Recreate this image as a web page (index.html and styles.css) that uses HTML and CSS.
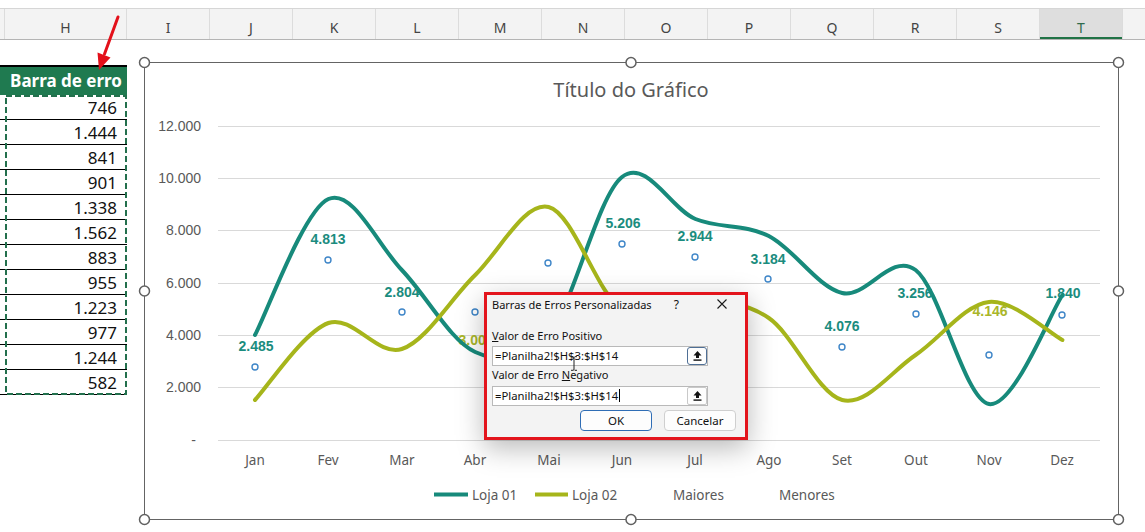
FILE: index.html
```html
<!DOCTYPE html>
<html lang="pt">
<head>
<meta charset="utf-8">
<title>Barras de erro</title>
<link rel="stylesheet" href="styles.css">
</head>
<body>
<div class="app">
  <div class="colbar">
    <div class="col col-g"></div>
    <div class="col col-h">H</div>
    <div class="col">I</div>
    <div class="col">J</div>
    <div class="col">K</div>
    <div class="col">L</div>
    <div class="col">M</div>
    <div class="col">N</div>
    <div class="col">O</div>
    <div class="col">P</div>
    <div class="col">Q</div>
    <div class="col">R</div>
    <div class="col">S</div>
    <div class="col col-sel">T</div>
    <div class="col col-rest"></div>
  </div>

  <div class="sheet">
    <div class="tablewrap">
      <div class="thead">Barra de erro</div>
      <div class="cell">746</div>
      <div class="cell">1.444</div>
      <div class="cell">841</div>
      <div class="cell">901</div>
      <div class="cell">1.338</div>
      <div class="cell">1.562</div>
      <div class="cell">883</div>
      <div class="cell">955</div>
      <div class="cell">1.223</div>
      <div class="cell">977</div>
      <div class="cell">1.244</div>
      <div class="cell">582</div>
      <svg class="ants" width="127" height="301" viewBox="0 0 127 301">
        <rect x="6" y="1" width="120" height="298" fill="none" stroke="#23704d" stroke-width="2" stroke-dasharray="6 3"/>
      </svg>
    </div>

    <div class="chart">
      <svg class="plot" width="975" height="458" viewBox="144 62 975 458">
        <rect x="144.5" y="62.5" width="974" height="457" fill="#fff" stroke="#646464" stroke-width="1"/>
        <text class="title" x="631" y="97">Título do Gráfico</text>

        <g class="grid">
          <line x1="218" x2="1100" y1="126.5" y2="126.5"/>
          <line x1="218" x2="1100" y1="178.5" y2="178.5"/>
          <line x1="218" x2="1100" y1="230.5" y2="230.5"/>
          <line x1="218" x2="1100" y1="283.5" y2="283.5"/>
          <line x1="218" x2="1100" y1="335.5" y2="335.5"/>
          <line x1="218" x2="1100" y1="387.5" y2="387.5"/>
          <line x1="218" x2="1100" y1="440.5" y2="440.5"/>
        </g>

        <g class="yaxis">
          <text x="201" y="131">12.000</text>
          <text x="201" y="183">10.000</text>
          <text x="201" y="235">8.000</text>
          <text x="201" y="288">6.000</text>
          <text x="201" y="340">4.000</text>
          <text x="201" y="392">2.000</text>
          <text x="196" y="445">-</text>
        </g>

        <g class="xaxis">
          <text x="255" y="465">Jan</text>
          <text x="328" y="465">Fev</text>
          <text x="402" y="465">Mar</text>
          <text x="475" y="465">Abr</text>
          <text x="549" y="465">Mai</text>
          <text x="622" y="465">Jun</text>
          <text x="695" y="465">Jul</text>
          <text x="769" y="465">Ago</text>
          <text x="842" y="465">Set</text>
          <text x="916" y="465">Out</text>
          <text x="989" y="465">Nov</text>
          <text x="1062" y="465">Dez</text>
        </g>

        <g class="dlabels">
          <text x="256" y="351">2.485</text>
          <text x="328" y="244">4.813</text>
          <text x="402" y="297">2.804</text>
          <text class="olive" x="476" y="345">3.005</text>
          <text x="623" y="228">5.206</text>
          <text x="695" y="241">2.944</text>
          <text x="768" y="264">3.184</text>
          <text x="842" y="331">4.076</text>
          <text x="915" y="298">3.256</text>
          <text class="olive" x="990" y="316">4.146</text>
          <text x="1063" y="298">1.840</text>
        </g>

        <path class="s1" d="M255,335 C267.2,312.3 303.9,209.8 328.4,199 C352.9,188.2 377.3,244.5 401.8,270 C426.3,295.5 450.7,341.2 475.2,352 C499.7,362.8 524.1,364.2 548.6,335 C573.1,305.8 597.5,196.3 622,177 C646.5,157.7 670.9,209.2 695.4,219 C719.9,228.8 744.3,223.7 768.8,236 C793.3,248.3 817.7,287.3 842.2,293 C866.7,298.7 891.1,251.5 915.6,270 C940.1,288.5 964.5,399.8 989,404 C1013.5,408.2 1050.2,313.2 1062.4,295"/>
        <path class="s2" d="M255,400 C267.2,387.2 303.9,331.5 328.4,323 C352.9,314.5 377.3,357 401.8,349 C426.3,341 450.7,298.7 475.2,275 C499.7,251.3 524.1,201.2 548.6,207 C573.1,212.8 597.5,294.5 622,310 C646.5,325.5 670.9,298.7 695.4,300 C719.9,301.3 744.3,301.3 768.8,318 C793.3,334.7 817.7,393.8 842.2,400 C866.7,406.2 891.1,371.3 915.6,355 C940.1,338.7 964.5,304.5 989,302 C1013.5,299.5 1050.2,333.7 1062.4,340"/>

        <g class="markers">
          <circle cx="255" cy="367" r="3"/>
          <circle cx="328" cy="260" r="3"/>
          <circle cx="402" cy="312" r="3"/>
          <circle cx="475" cy="312" r="3"/>
          <circle cx="548" cy="263" r="3"/>
          <circle cx="622" cy="244" r="3"/>
          <circle cx="695" cy="257" r="3"/>
          <circle cx="768" cy="279" r="3"/>
          <circle cx="842" cy="347" r="3"/>
          <circle cx="916" cy="314" r="3"/>
          <circle cx="989" cy="355" r="3"/>
          <circle cx="1062" cy="315" r="3"/>
        </g>

        <g class="legend">
          <line class="lg1" x1="434" x2="468" y1="494.5" y2="494.5"/>
          <text x="472" y="499.5">Loja 01</text>
          <line class="lg2" x1="535" x2="568" y1="494.5" y2="494.5"/>
          <text x="572" y="499.5">Loja 02</text>
          <text x="673" y="499.5">Maiores</text>
          <text x="779" y="499.5">Menores</text>
        </g>

        <g class="handles">
          <circle cx="144.5" cy="62.5" r="5"/>
          <circle cx="631" cy="62.5" r="5"/>
          <circle cx="1118.5" cy="62.5" r="5"/>
          <circle cx="144.5" cy="291" r="5"/>
          <circle cx="1118.5" cy="291" r="5"/>
          <circle cx="144.5" cy="519.5" r="5"/>
          <circle cx="631" cy="519.5" r="5"/>
          <circle cx="1118.5" cy="519.5" r="5"/>
        </g>
      </svg>

      <div class="dialog">
        <div class="dlg-title">
          <span class="dlg-name">Barras de Erros Personalizadas</span>
          <span class="dlg-help">?</span>
          <svg class="dlg-close" width="10" height="10" viewBox="0 0 10 10"><path d="M0.5,0.5 L9.5,9.5 M9.5,0.5 L0.5,9.5" stroke="#1a1a1a" stroke-width="1.1" fill="none"/></svg>
        </div>
        <div class="dlg-body">
          <div class="dlg-label"><u>V</u>alor de Erro Positivo</div>
          <div class="dlg-input">
            <span class="dlg-text">=Planilha2!$H$3:$H$14</span>
            <span class="rng rng-focus"><svg width="9" height="10" viewBox="0 0 9 10"><path d="M4.5,0 L8.5,4.5 L6,4.5 L6,7 L3,7 L3,4.5 L0.5,4.5 Z" fill="#111"/><rect x="0.5" y="8.4" width="8" height="1.4" fill="#111"/></svg></span>
            <svg class="ibeam" width="8" height="15" viewBox="0 0 8 15"><path d="M1,0.7 H3.2 L4,1.5 L4.8,0.7 H7 M4,1.5 V13.5 M1,14.3 H3.2 L4,13.5 L4.8,14.3 H7" stroke="#222" stroke-width="1" fill="none"/></svg>
          </div>
          <div class="dlg-label dlg-label2">Valor de Erro <u>N</u>egativo</div>
          <div class="dlg-input dlg-input2">
            <span class="dlg-text">=Planilha2!$H$3:$H$14<span class="caret"></span></span>
            <span class="rng"><svg width="9" height="10" viewBox="0 0 9 10"><path d="M4.5,0 L8.5,4.5 L6,4.5 L6,7 L3,7 L3,4.5 L0.5,4.5 Z" fill="#111"/><rect x="0.5" y="8.4" width="8" height="1.4" fill="#111"/></svg></span>
          </div>
          <div class="dlg-buttons">
            <button class="btn btn-ok">OK</button>
            <button class="btn">Cancelar</button>
          </div>
        </div>
      </div>
    </div>
  </div>

  <svg class="arrow" width="130" height="80" viewBox="0 0 130 80">
    <line x1="118" y1="17" x2="104.5" y2="54" stroke="#e3101a" stroke-width="3" stroke-linecap="round"/>
    <polygon points="99,70 97.5,52.5 110.5,57.5" fill="#e3101a"/>
  </svg>
</div>
</body>
</html>
```

FILE: styles.css
```css
html, body {
  margin: 0;
  padding: 0;
  background: #ffffff;
}

.app {
  position: relative;
  width: 1145px;
  height: 532px;
  overflow: hidden;
  background: #ffffff;
}

/* ---------- column header bar ---------- */
.colbar {
  display: flex;
  margin-top: 8px;
  height: 32px;
  box-sizing: border-box;
  border-top: 1px solid #d6d6d6;
  border-bottom: 1px solid #b4b4b4;
  background: #f3f3f3;
}

.col {
  flex: 0 0 83px;
  box-sizing: border-box;
  border-right: 1px solid #dcdcdc;
  padding-top: 7px;
  display: flex;
  align-items: center;
  justify-content: center;
  font-family: "Noto Sans", sans-serif;
  font-size: 14px;
  color: #444444;
}

.col-g { flex-basis: 5px; }
.col-h { flex-basis: 122px; }
.col-rest { flex: 1 1 auto; border-right: 0; }

.col-sel {
  background: #dedede;
  color: #2f6b4c;
  box-shadow: inset 0 -2px 0 #217346;
}

/* ---------- sheet ---------- */
.sheet {
  display: flex;
  align-items: flex-start;
}

.tablewrap {
  position: relative;
  flex: 0 0 127px;
  margin-top: 25px;
  font-family: "Noto Sans", sans-serif;
}

.thead {
  height: 30px;
  box-sizing: border-box;
  border-top: 2px solid #000;
  background: #1f7a50;
  color: #ffffff;
  font-weight: 700;
  font-size: 17px;
  line-height: 28px;
  text-align: right;
  padding-right: 5px;
}

.cell {
  height: 25px;
  box-sizing: border-box;
  border-bottom: 1px solid #000;
  padding-top: 2px;
  padding-right: 10px;
  font-size: 17px;
  line-height: 22px;
  text-align: right;
  color: #111111;
}

.ants {
  position: absolute;
  left: 0;
  top: 30px;
  display: block;
}

/* ---------- chart ---------- */
.chart {
  position: relative;
  flex: 0 0 975px;
  height: 458px;
  margin-left: 17px;
  margin-top: 22px;
}

.plot {
  display: block;
  overflow: visible;
}

.title {
  font-family: "Noto Sans", sans-serif;
  font-size: 20px;
  fill: #595959;
  text-anchor: middle;
}

.grid line {
  stroke: #d9d9d9;
  stroke-width: 1;
}

.yaxis text {
  font-family: "Liberation Sans", sans-serif;
  font-size: 14px;
  fill: #595959;
  text-anchor: end;
}

.xaxis text {
  font-family: "Noto Sans", sans-serif;
  font-size: 13.5px;
  fill: #595959;
  text-anchor: middle;
}

.dlabels text {
  font-family: "Liberation Sans", sans-serif;
  font-weight: 700;
  font-size: 14px;
  fill: #1b8c7e;
  text-anchor: middle;
}

.dlabels text.olive {
  fill: #a9b62a;
}

.s1, .s2 {
  fill: none;
  stroke-width: 4;
  stroke-linecap: round;
  stroke-linejoin: round;
}

.s1 { stroke: #178a7b; }
.s2 { stroke: #a6b51b; }

.markers circle {
  fill: #ffffff;
  stroke: #3f86c8;
  stroke-width: 1.4;
}

.legend line {
  stroke-width: 4;
}

.lg1 { stroke: #178a7b; }
.lg2 { stroke: #a6b51b; }

.legend text {
  font-family: "Noto Sans", sans-serif;
  font-size: 13.5px;
  fill: #595959;
}

.handles circle {
  fill: #ffffff;
  stroke: #606060;
  stroke-width: 1.5;
}

/* ---------- dialog ---------- */
.dialog {
  position: absolute;
  left: 340px;
  top: 230px;
  width: 264px;
  height: 148px;
  box-sizing: border-box;
  border: 3px solid #e3141c;
  background: #f3f3f3;
  box-shadow: 0 8px 26px rgba(0, 0, 0, 0.28);
  font-family: "Noto Sans", sans-serif;
  color: #111111;
}

.dlg-title {
  display: flex;
  align-items: center;
  height: 18px;
  padding: 0 18px 0 5px;
  font-size: 11px;
}

.dlg-name {
  flex: 1 1 auto;
}

.dlg-help {
  font-size: 12px;
  margin-right: 38px;
}

.dlg-close {
  display: block;
}

.dlg-body {
  padding-left: 5px;
}

.dlg-label {
  margin-top: 16px;
  height: 14px;
  font-size: 11px;
  line-height: 14px;
}

.dlg-label2 {
  margin-top: 2px;
}

.dlg-input {
  position: relative;
  display: flex;
  align-items: center;
  width: 216px;
  height: 20px;
  box-sizing: border-box;
  margin-top: 3px;
  border: 1px solid #b9b9b9;
  background: #ffffff;
}

.dlg-input2 {
  margin-top: 4px;
}

.dlg-text {
  flex: 1 1 auto;
  padding-left: 2px;
  font-size: 11.3px;
  line-height: 18px;
  white-space: nowrap;
}

.caret {
  display: inline-block;
  width: 1px;
  height: 13px;
  margin-left: 1px;
  vertical-align: -2px;
  background: #000;
}

.rng {
  flex: 0 0 20px;
  height: 18px;
  box-sizing: border-box;
  border: 1px solid #c9c9c9;
  border-radius: 2px;
  background: #fdfdfd;
  display: flex;
  align-items: center;
  justify-content: center;
}

.rng-focus {
  border-color: #4f6f95;
  border-radius: 3px;
}

.rng svg {
  display: block;
}

.ibeam {
  position: absolute;
  left: 77px;
  top: 9px;
}

.dlg-buttons {
  display: flex;
  justify-content: flex-end;
  gap: 12px;
  margin-top: 4px;
  padding-right: 9px;
}

.btn {
  width: 72px;
  height: 21px;
  box-sizing: border-box;
  padding: 0;
  border: 1px solid #cfcfcf;
  border-radius: 4px;
  background: #fdfdfd;
  font-family: "Noto Sans", sans-serif;
  font-size: 11.5px;
  line-height: 19px;
  color: #111111;
}

.btn-ok {
  border: 1.5px solid #2f6db5;
}

/* ---------- annotation arrow ---------- */
.arrow {
  position: absolute;
  left: 0;
  top: 0;
}
```
